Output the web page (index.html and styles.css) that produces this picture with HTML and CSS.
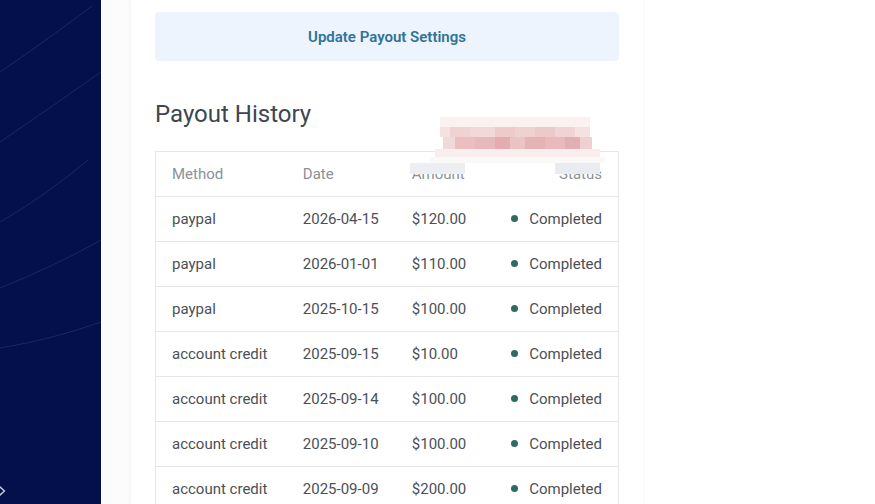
FILE: index.html
```html
<!DOCTYPE html>
<html>
<head>
<meta charset="UTF-8">
<link rel="stylesheet" href="styles.css">
</head>
<body>
<div class="layout">
  <aside class="sidebar">
    <svg class="sidebar-lines" viewBox="0 0 101 504" preserveAspectRatio="none">
      <path d="M0,72 Q40,45 92,6" />
      <path d="M0,142 Q50,108 101,72" />
      <path d="M0,222 Q45,196 88,160" />
      <path d="M0,288 Q55,266 101,240" />
      <path d="M0,348 Q50,340 101,322" />
    </svg>
    <svg class="expand-icon" viewBox="0 0 10 20">
      <polyline points="-4,2 5,10 -4,18" />
    </svg>
  </aside>

  <main class="main">
    <div class="card">
      <button class="settings-btn">Update Payout Settings</button>

      <h2 class="section-title">Payout History</h2>

      <div class="table-wrap">
        <table class="history">
          <thead>
            <tr>
              <th class="col-method">Method</th>
              <th class="col-date">Date</th>
              <th class="col-amount">Amount</th>
              <th class="col-status">Status</th>
            </tr>
          </thead>
          <tbody>
            <tr><td>paypal</td><td>2026-04-15</td><td>$120.00</td><td class="status"><span class="dot"></span>Completed</td></tr>
            <tr><td>paypal</td><td>2026-01-01</td><td>$110.00</td><td class="status"><span class="dot"></span>Completed</td></tr>
            <tr><td>paypal</td><td>2025-10-15</td><td>$100.00</td><td class="status"><span class="dot"></span>Completed</td></tr>
            <tr><td>account credit</td><td>2025-09-15</td><td>$10.00</td><td class="status"><span class="dot"></span>Completed</td></tr>
            <tr><td>account credit</td><td>2025-09-14</td><td>$100.00</td><td class="status"><span class="dot"></span>Completed</td></tr>
            <tr><td>account credit</td><td>2025-09-10</td><td>$100.00</td><td class="status"><span class="dot"></span>Completed</td></tr>
            <tr><td>account credit</td><td>2025-09-09</td><td>$200.00</td><td class="status"><span class="dot"></span>Completed</td></tr>
          </tbody>
        </table>

        <!-- redacted area -->
        <svg class="mosaic" viewBox="0 0 200 60">
          <rect x="35" y="0" width="150" height="10" fill="#fbf1f1"/>
          <rect x="35" y="10" width="10" height="10" fill="#f5e1e1"/>
          <rect x="45" y="10" width="20" height="10" fill="#f0d2d2"/>
          <rect x="65" y="10" width="25" height="10" fill="#f2d8d8"/>
          <rect x="90" y="10" width="20" height="10" fill="#eecacb"/>
          <rect x="110" y="10" width="20" height="10" fill="#f0d1d2"/>
          <rect x="130" y="10" width="20" height="10" fill="#eccaca"/>
          <rect x="150" y="10" width="20" height="10" fill="#f0d3d4"/>
          <rect x="170" y="10" width="15" height="10" fill="#f4e1e1"/>
          <rect x="38" y="20" width="12" height="12" fill="#f2d9d9"/>
          <rect x="50" y="20" width="20" height="12" fill="#ebbfc0"/>
          <rect x="70" y="20" width="20" height="12" fill="#e8b9bb"/>
          <rect x="90" y="20" width="15" height="12" fill="#e3adb0"/>
          <rect x="105" y="20" width="15" height="12" fill="#ecc3c4"/>
          <rect x="120" y="20" width="20" height="12" fill="#e6b3b5"/>
          <rect x="140" y="20" width="20" height="12" fill="#e9b9bb"/>
          <rect x="160" y="20" width="15" height="12" fill="#e4afb2"/>
          <rect x="175" y="20" width="12" height="12" fill="#efcfd0"/>
          <rect x="30" y="32" width="165" height="8" fill="#f8eeee"/>
          <rect x="25" y="40" width="175" height="6" fill="#fbf8f8"/>
          <rect x="5" y="46" width="55" height="11" fill="#eceef1"/>
          <rect x="150" y="46" width="45" height="11" fill="#e8ebf0"/>
        </svg>
      </div>
    </div>
  </main>
</div>
</body>
</html>
```

FILE: styles.css
```css
:root {
  --navy: #03104b;
  --page-bg: #fcfcfd;
  --card-bg: #ffffff;
  --btn-bg: #edf4fd;
  --btn-text: #2f7399;
  --heading: #3d4651;
  --text: #4b5057;
  --muted: #8b9198;
  --border: #e6e7ea;
  --ok: #2f6b5e;
}

* {
  box-sizing: border-box;
  margin: 0;
  padding: 0;
}

body {
  font-family: Roboto, "Liberation Sans", sans-serif;
  background: #ffffff;
  color: var(--text);
  height: 504px;
  overflow: hidden;
}

.layout {
  display: flex;
  height: 504px;
}

.sidebar {
  position: relative;
  width: 101px;
  flex-shrink: 0;
  background: var(--navy);
  overflow: hidden;
}

.sidebar-lines {
  position: absolute;
  top: 0;
  left: 0;
  width: 101px;
  height: 504px;
}

.sidebar-lines path {
  fill: none;
  stroke: rgba(110, 130, 200, 0.2);
  stroke-width: 1;
}

.expand-icon {
  position: absolute;
  left: 0;
  bottom: 4px;
  width: 9px;
  height: 18px;
}

.expand-icon polyline {
  fill: none;
  stroke: #c9cedb;
  stroke-width: 1.5;
}

.main {
  flex: 1;
  padding-left: 30px;
  background: linear-gradient(to right, var(--page-bg) 0, var(--page-bg) 542px, #ffffff 542px);
}

.card {
  width: 512px;
  height: 504px;
  background: var(--card-bg);
  padding: 12px 24px 0;
  box-shadow: 0 0 4px rgba(0, 0, 0, 0.06);
}

.settings-btn {
  display: block;
  width: 100%;
  border: none;
  border-radius: 4px;
  background: var(--btn-bg);
  color: var(--btn-text);
  font-family: inherit;
  font-size: 15px;
  font-weight: 600;
  line-height: 19px;
  padding: 16px 0 14px;
  cursor: pointer;
}

.section-title {
  margin-top: 37px;
  margin-bottom: 21px;
  font-size: 24px;
  font-weight: 400;
  line-height: 32px;
  color: var(--heading);
}

.table-wrap {
  position: relative;
}

.history {
  width: 100%;
  border: 1px solid var(--border);
  border-spacing: 0;
  font-size: 15px;
  line-height: 18px;
}

.history th,
.history td {
  text-align: left;
  padding: 13px 16px;
  white-space: nowrap;
}

.history th {
  font-weight: 400;
  color: var(--muted);
}

.history td {
  border-top: 1px solid var(--border);
  color: var(--text);
}

.col-method {
  width: 131px;
}

.col-date {
  width: 109px;
}

.col-amount {
  width: 100px;
}

.history .col-status,
.history .status {
  text-align: right;
}

.dot {
  display: inline-block;
  width: 7px;
  height: 7px;
  border-radius: 50%;
  background: var(--ok);
  margin-right: 11px;
  vertical-align: 2px;
}

.mosaic {
  position: absolute;
  left: 250px;
  top: -34px;
  width: 200px;
  height: 60px;
}
```
